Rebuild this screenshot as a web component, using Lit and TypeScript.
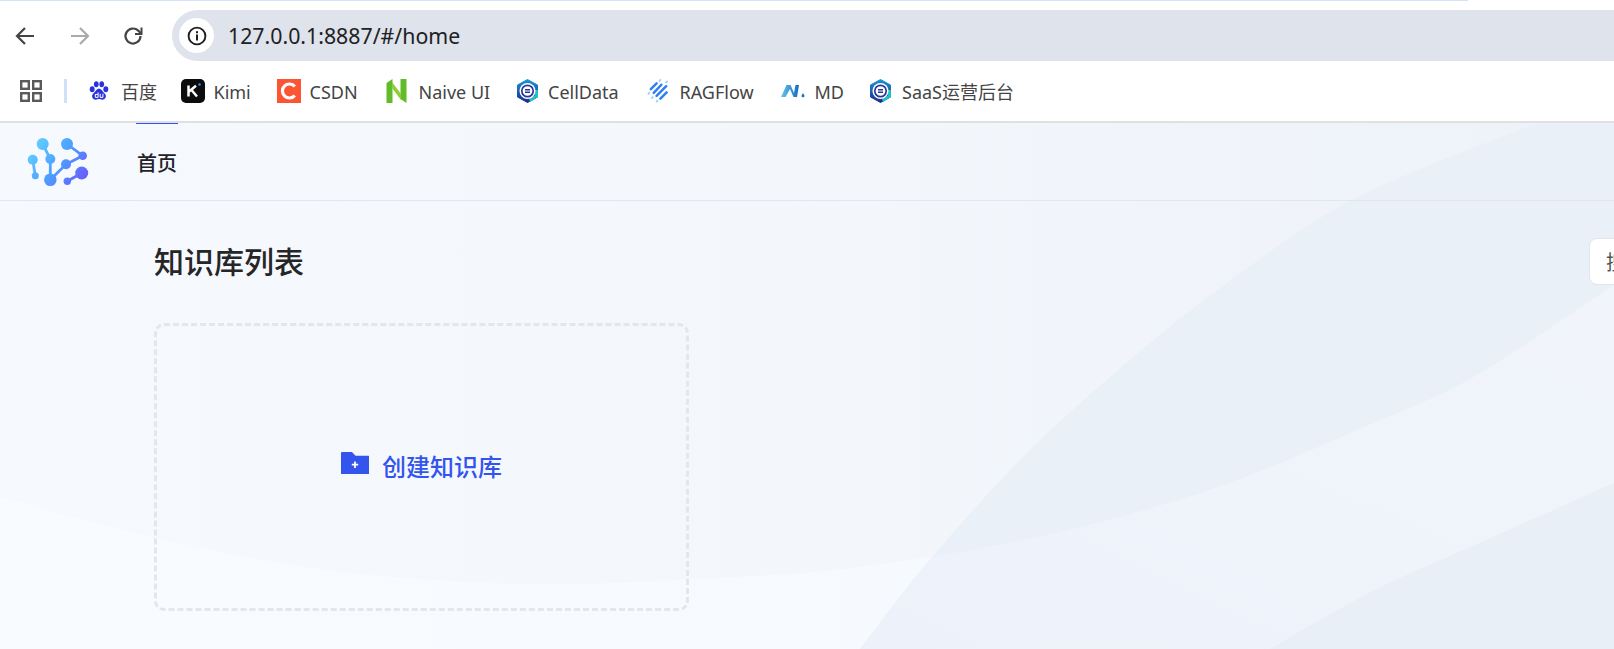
import { LitElement, html, css, svg } from "lit";
import { customElement } from "lit/decorators.js";

type Pt = [number, number];

/** Catmull-Rom curve through the points, as SVG path segments. */
function smooth(p: Pt[]): string {
  let d = "";
  for (let i = 0; i < p.length - 1; i++) {
    const p0 = p[Math.max(i - 1, 0)];
    const p1 = p[i];
    const p2 = p[i + 1];
    const p3 = p[Math.min(i + 2, p.length - 1)];
    const c1x = p1[0] + (p2[0] - p0[0]) / 6;
    const c1y = p1[1] + (p2[1] - p0[1]) / 6;
    const c2x = p2[0] - (p3[0] - p1[0]) / 6;
    const c2y = p2[1] - (p3[1] - p1[1]) / 6;
    d += `C${c1x} ${c1y} ${c2x} ${c2y} ${p2[0]} ${p2[1]}`;
  }
  return d;
}

const lowerLeft: Pt[] = [[0, 374], [156, 415], [311, 445], [467, 459], [571, 461], [675, 457], [814, 449], [932, 434]];
const lowerRight: Pt[] = [[932, 434], [1060, 409], [1215, 365], [1371, 301], [1475, 253], [1614, 162]];
const sweep: Pt[] = [[860, 526], [932, 434], [1023, 334], [1111, 253], [1215, 169], [1350, 78], [1527, 4], [1545, 0]];
const corner: Pt[] = [[1270, 526], [1371, 469], [1475, 422], [1614, 360]];
const sweepLow: Pt[] = [[860, 526], [932, 434]];

const cellIcon = (id: string) => svg`<svg width="23" height="24" viewBox="0 0 23 24"><defs><linearGradient id=${id} x1="0" y1="0" x2="0" y2="1"><stop offset="0" stop-color="#1597d6"/><stop offset="1" stop-color="#1c2b8c"/></linearGradient></defs><path d="M11.500 .5 21.500 6V18L11.500 23.500 1.500 18V6Z" fill=${`url(#${id})`} stroke=${`url(#${id})`} stroke-width="1" stroke-linejoin="round"/><path d="M22 11V18L14 23 13 20 19 16.500V11Z" fill="#23bfc9"/><circle cx="11.500" cy="12" r="8" fill="#fff"/><circle cx="11.500" cy="12" r="5.700" fill="none" stroke="#2a3598" stroke-width="1.700"/><path d="M9 10.800h5M9 13.200h5" stroke="#2a3598" stroke-width="1.400"/></svg>`;

const bookmarks = [
  { label: "百度", w: 91.5, gap: 12, icon: svg`<svg width="20" height="24" viewBox="0 0 22 24" fill="#2932e1"><ellipse cx="3.500" cy="10" rx="2.700" ry="3.300"/><ellipse cx="8" cy="4.500" rx="2.600" ry="3.300"/><ellipse cx="14" cy="4.500" rx="2.600" ry="3.300"/><ellipse cx="18.500" cy="10" rx="2.700" ry="3.300"/><path d="M11 9.500c3 0 3.500 3 6 5 3 2.500 1.500 7-2.500 7-1.500 0-2.300-.6-3.500-.6s-2 .6-3.500.6c-4 0-5.500-4.500-2.500-7 2.500-2 3-5 6-5z"/><path d="M7 15.500v3.500h3v-5.500M9.800 15.800H7M12.300 15v4h3v-4" fill="none" stroke="#fff" stroke-width="1.100"/></svg>` },
  { label: "Kimi", w: 96, gap: 9, icon: svg`<svg width="24" height="24" viewBox="0 0 24 24"><rect width="24" height="24" rx="5" fill="#0c0c0c"/><path d="M7.500 6.500v11M7.500 13 15 6.800M10.500 11 16 17.500" stroke="#fff" stroke-width="2.500" fill="none"/><circle cx="18.500" cy="5.500" r="1.300" fill="#1e90ff"/></svg>` },
  { label: "CSDN", w: 109, gap: 9, icon: svg`<svg width="24" height="24" viewBox="0 0 24 24"><rect width="24" height="24" fill="#fc5531"/><path d="M17.800 7.500A7 7 0 1 0 17.800 16.500" fill="none" stroke="#fff" stroke-width="3.200"/></svg>` },
  { label: "Naive UI", w: 130, gap: 12, icon: svg`<svg width="21" height="24" viewBox="0 0 20 24"><path d="M0 4 6 0v24H0Z" fill="#63bb2a"/><path d="M14 0h6v24L14 20Z" fill="#63bb2a"/><path d="M5.500 3 14.500 15v6L5.500 9Z" fill="#8ccf35"/></svg>` },
  { label: "CellData", w: 131, gap: 9.5, icon: cellIcon("c1") },
  { label: "RAGFlow", w: 134, gap: 10, icon: svg`<svg width="23" height="24" viewBox="0 0 24 24" fill="none" stroke-linecap="round"><g stroke="#2f7ff5" stroke-width="2.600"><path d="M4 10 10 4M7 14 15 5.500M10 17 20 7M14 20 20.500 13.500"/></g><g stroke="#9ccdfb" stroke-width="1.800"><path d="M1.500 15l1-1M5 19.500l1-1M10 23l1-1M13 1.500l1-1M20 3l1-1"/></g></svg>` },
  { label: "MD", w: 88.5, gap: 10, icon: svg`<svg width="24" height="24" viewBox="0 0 24 24"><defs><linearGradient id="md" x1="0" y1="0" x2="1" y2="0"><stop offset="0" stop-color="#6cc0ee"/><stop offset="1" stop-color="#0f6fc0"/></linearGradient></defs><path d="M0 18 5.500 6h4L13 14 14.500 6h3.500L16 18h-3.500L9 10 4.500 18Z" fill="url(#md)"/><path d="M22 14l1.500 2.700a1.500 1.500 0 1 1-3 0Z" fill="#1a70bd"/></svg>` },
  { label: "SaaS运营后台", w: 150, gap: 10, icon: cellIcon("c2") },
];

@customElement("app-root")
export class AppRoot extends LitElement {
  static styles = css`
    :host { display: block; width: 1614px; height: 649px; overflow: hidden; font-family: "Noto Sans CJK SC", "Noto Sans", sans-serif; color: #1f2225; }
    .progress { height: 1px; width: 1468px; background: #d3e3fd; }
    .toolbar { height: 60px; background: #fff; display: flex; align-items: flex-start; padding-top: 9px; box-sizing: border-box; }
    .nav { display: flex; align-items: center; width: 172px; height: 51px; }
    .nav svg { display: block; flex: none; }
    .nav .b1 { margin-left: 13px; }
    .nav .b2 { margin-left: 31px; }
    .nav .b3 { margin-left: 29px; }
    .omni { flex: 1; height: 51px; background: #dfe3eb; border-radius: 26px 0 0 26px; display: flex; align-items: center; padding-left: 7px; }
    .site { width: 35px; height: 35px; border-radius: 50%; background: #fff; display: flex; align-items: center; justify-content: center; }
    .url { margin-left: 14px; font: 21.3px/1 "Noto Sans", Arial, sans-serif; color: #202124; }
    .marks { height: 60px; background: #fff; border-bottom: 2px solid #e0e0e0; display: flex; align-items: center; }
    .apps { margin-left: 20px; flex: none; display: block; }
    .sep { width: 3px; height: 24px; background: #cfe0f8; margin: 0 22px; flex: none; }
    .mark { display: flex; align-items: center; flex: none; }
    .mark svg { display: block; flex: none; }
    .mark span { font: 18px/24px "Noto Sans", "Noto Sans CJK SC", sans-serif; color: #444; padding-top: 2px; white-space: nowrap; }
    .page { position: relative; height: 526px; background: #f5f8fd; overflow: hidden; }
    .bg { position: absolute; inset: 0; display: block; }
    .content { position: relative; }
    .head { height: 77px; border-bottom: 1px solid #e3e7ed; display: flex; align-items: stretch; }
    .logo { margin: 13px 0 0 26px; flex: none; display: block; }
    .tab { margin-left: 46px; width: 42px; display: flex; justify-content: center; align-items: center; border-top: 1px solid #3355ee; height: 76px; box-sizing: border-box; font-size: 20px; font-weight: 500; color: #1f2329; padding-top: 2px; }
    .main { padding: 39px 0 0 154px; }
    h1 { margin: 0; font-size: 30px; line-height: 40px; font-weight: 500; color: #262626; }
    .card { margin-top: 43px; width: 535px; height: 288px; box-sizing: border-box; border: 3px dashed #e4e6ea; border-radius: 10px; display: flex; align-items: center; justify-content: center; gap: 13px; color: #3355ee; font-size: 24px; font-weight: 500; padding-bottom: 4px; }
    .card svg { display: block; margin-top: -4px; }
    .search { position: absolute; left: 1589px; top: 115px; width: 60px; height: 47px; background: #fff; border: 1px solid #e2e6ec; border-radius: 8px; box-sizing: border-box; padding-left: 16px; font-size: 20px; line-height: 45px; color: #555; white-space: nowrap; }
  `;

  render() {
    return html`
      <div class="progress"></div>
      <div class="toolbar">
        <div class="nav">
          <svg class="b1" width="24" height="24" viewBox="0 0 24 24" fill="none" stroke="#444" stroke-width="2.200"><path d="M21 12H4M12 4l-8 8 8 8"/></svg>
          <svg class="b2" width="24" height="24" viewBox="0 0 24 24" fill="none" stroke="#aaa" stroke-width="2.200"><path d="M3 12h17M12 4l8 8-8 8"/></svg>
          <svg class="b3" width="24" height="24" viewBox="0 0 24 24" fill="none" stroke="#444" stroke-width="2.200"><path d="M19.500 12a7.500 7.500 0 1 1-2.300-5.400L20 9.500"/><path d="M20.500 3.500V10H14" stroke-width="2"/></svg>
        </div>
        <div class="omni">
          <div class="site"><svg width="20" height="20" viewBox="0 0 20 20" fill="none"><circle cx="10" cy="10" r="8.400" stroke="#1f1f1f" stroke-width="1.900"/><rect x="9" y="8.500" width="2" height="6" fill="#1f1f1f"/><rect x="9" y="5.200" width="2" height="2" fill="#1f1f1f"/></svg></div>
          <div class="url">127.0.0.1:8887/#/home</div>
        </div>
      </div>
      <div class="marks">
        <svg class="apps" width="22" height="22" viewBox="0 0 22 22" fill="none" stroke="#5a5a5a" stroke-width="2.400"><rect x="1.200" y="1.200" width="7.600" height="7.600"/><rect x="13.200" y="1.200" width="7.600" height="7.600"/><rect x="1.200" y="13.200" width="7.600" height="7.600"/><rect x="13.200" y="13.200" width="7.600" height="7.600"/></svg>
        <div class="sep"></div>
        ${bookmarks.map(
          (b) => html`<div class="mark" style="width:${b.w}px;gap:${b.gap}px">${b.icon}<span>${b.label}</span></div>`
        )}
      </div>
      <div class="page">
        <svg class="bg" width="1614" height="526" viewBox="0 0 1614 526">
          <defs>
            <linearGradient id="g1" x1="0" y1="0" x2="1" y2="0"><stop offset="0" stop-color="#f6f9fe"/><stop offset=".55" stop-color="#f3f6fb"/><stop offset="1" stop-color="#edf2f9"/></linearGradient>
            <linearGradient id="g2" x1="0" y1="0" x2="1" y2="0"><stop offset="0" stop-color="#f8fbff"/><stop offset="1" stop-color="#f6f9fe"/></linearGradient>
            <linearGradient id="g4" x1="0" y1="1" x2="1" y2="0"><stop offset="0" stop-color="#edf2fa"/><stop offset="1" stop-color="#f1f4fb"/></linearGradient>
          </defs>
          <rect width="1614" height="526" fill="url(#g1)"/>
          <path d=${`M0 374${smooth(lowerLeft)}L860 526H0Z`} fill="url(#g2)"/>
          <path d=${`M860 526${smooth(sweep)}H1614V526Z`} fill="#e9f0f8"/>
          <path d=${`M860 526${smooth(sweepLow)}${smooth(lowerRight)}V526Z`} fill="url(#g4)"/>
          <path d=${`M1270 526${smooth(corner)}V526Z`} fill="#e9eff7"/>
        </svg>
        <div class="content">
          <div class="head">
            <svg class="logo" width="64" height="50" viewBox="0 0 64 50">
              <defs><linearGradient id="lg" gradientUnits="userSpaceOnUse" x1="6" y1="6" x2="58" y2="44"><stop offset="0" stop-color="#63d2ff"/><stop offset=".55" stop-color="#4c9cff"/><stop offset="1" stop-color="#6a5cff"/></linearGradient></defs>
              <g stroke="url(#lg)" stroke-width="2.800" fill="none"><path d="M16.700 8 24.300 23V43.700"/><path d="M6.700 23.700 9.300 39.700"/><path d="M24.300 43.700 40 28.300 56.700 19.700 41 8"/><path d="M41.300 45.300 55.700 37"/></g>
              <g fill="url(#lg)">
                <circle cx="16.700" cy="8" r="6"/><circle cx="6.700" cy="23.700" r="5"/><circle cx="9.300" cy="39.700" r="3.500"/>
                <circle cx="24.300" cy="23" r="5"/><circle cx="24.300" cy="43.700" r="6.300"/><circle cx="41" cy="8" r="6"/>
                <circle cx="40" cy="28.300" r="5"/><circle cx="56.700" cy="19.700" r="4.300"/><circle cx="55.700" cy="37" r="6.500"/><circle cx="41.300" cy="45.300" r="3.700"/>
              </g>
            </svg>
            <div class="tab">首页</div>
          </div>
          <div class="main">
            <h1>知识库列表</h1>
            <div class="card">
              <svg width="28" height="22" viewBox="0 0 28 22"><path d="M1 0H11l3.500 3.700H27.500a.5.5 0 0 1 .5.500V21.500a.5.5 0 0 1-.5.500H.5a.5.5 0 0 1-.5-.5V1a1 1 0 0 1 1-1Z" fill="#3355ee"/><path d="M14 9.500v6.400M10.800 12.700h6.400" stroke="#fff" stroke-width="1.800"/></svg>
              <span>创建知识库</span>
            </div>
          </div>
          <div class="search">搜索</div>
        </div>
      </div>
    `;
  }
}
